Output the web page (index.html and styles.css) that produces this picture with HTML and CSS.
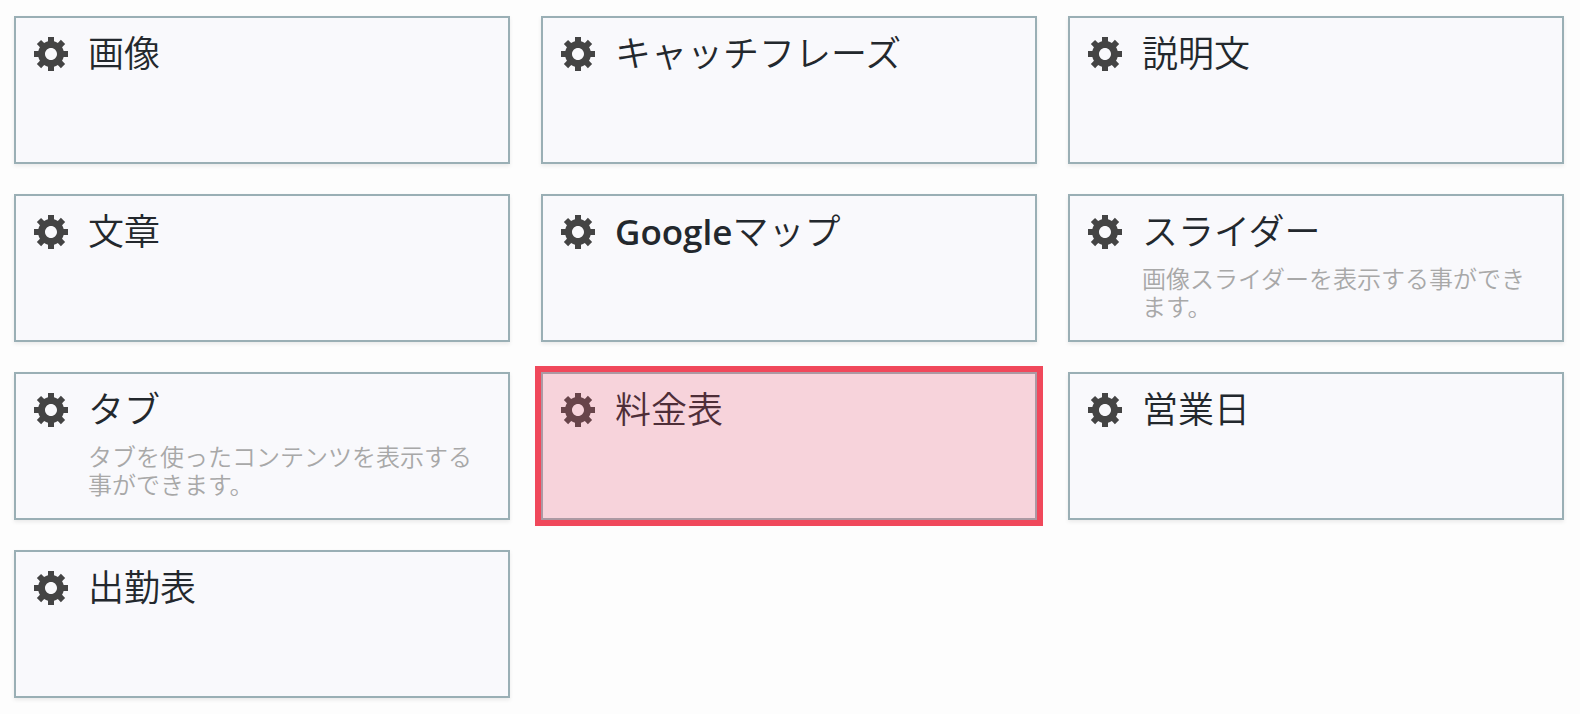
FILE: index.html
```html
<!DOCTYPE html>
<html lang="ja">
<head>
    <meta charset="UTF-8">
    <meta name="viewport" content="width=device-width, initial-scale=1.0">
    <title>ウィジェット</title>
    <link rel="stylesheet" href="styles.css">
</head>
<body>
    <svg class="sprite" aria-hidden="true">
        <symbol id="gear" viewBox="1 2 17 17">
            <path d="M18 12h-2.18c-.17.7-.44 1.35-.81 1.93l1.54 1.54-2.1 2.1-1.54-1.54c-.58.36-1.23.63-1.91.79V19H8v-2.18c-.68-.16-1.33-.43-1.91-.79l-1.54 1.54-2.12-2.12 1.54-1.54c-.36-.58-.63-1.23-.79-1.91H1V9.03h2.17c.16-.7.44-1.35.8-1.94L2.43 5.55l2.1-2.1 1.54 1.54c.58-.37 1.24-.64 1.93-.81V2h3v2.18c.68.16 1.33.43 1.91.79l1.54-1.54 2.12 2.12-1.54 1.54c.36.59.64 1.24.8 1.94H18V12zm-8.5 1.5c1.66 0 3-1.34 3-3s-1.34-3-3-3-3 1.34-3 3 1.34 3 3 3z"/>
        </symbol>
    </svg>
    <ul class="widget-list">
        <li class="widget">
            <svg class="icon"><use href="#gear"/></svg>
            <div class="widget-text">
                <h3>画像</h3>
            </div>
        </li>
        <li class="widget">
            <svg class="icon"><use href="#gear"/></svg>
            <div class="widget-text">
                <h3>キャッチフレーズ</h3>
            </div>
        </li>
        <li class="widget">
            <svg class="icon"><use href="#gear"/></svg>
            <div class="widget-text">
                <h3>説明文</h3>
            </div>
        </li>
        <li class="widget">
            <svg class="icon"><use href="#gear"/></svg>
            <div class="widget-text">
                <h3>文章</h3>
            </div>
        </li>
        <li class="widget">
            <svg class="icon"><use href="#gear"/></svg>
            <div class="widget-text">
                <h3><span class="latin">Google</span>マップ</h3>
            </div>
        </li>
        <li class="widget">
            <svg class="icon"><use href="#gear"/></svg>
            <div class="widget-text">
                <h3>スライダー</h3>
                <p>画像スライダーを表示する事ができます。</p>
            </div>
        </li>
        <li class="widget">
            <svg class="icon"><use href="#gear"/></svg>
            <div class="widget-text">
                <h3>タブ</h3>
                <p>タブを使ったコンテンツを表示する事ができます。</p>
            </div>
        </li>
        <li class="widget selected">
            <svg class="icon"><use href="#gear"/></svg>
            <div class="widget-text">
                <h3>料金表</h3>
            </div>
        </li>
        <li class="widget">
            <svg class="icon"><use href="#gear"/></svg>
            <div class="widget-text">
                <h3>営業日</h3>
            </div>
        </li>
        <li class="widget">
            <svg class="icon"><use href="#gear"/></svg>
            <div class="widget-text">
                <h3>出勤表</h3>
            </div>
        </li>
    </ul>
</body>
</html>
```
FILE: styles.css
```css
* {
    box-sizing: border-box;
}

body {
    margin: 0;
    background: #fdfdfd;
    color: #23282d;
    font-family: "Noto Sans CJK JP", sans-serif;
    font-weight: 350;
}

.sprite {
    display: none;
}

.widget-list {
    display: grid;
    grid-template-columns: repeat(3, 1fr);
    gap: 30px 31px;
    margin: 0;
    padding: 16px 16px 16px 14px;
    list-style: none;
}

.widget {
    position: relative;
    display: flex;
    gap: 20px;
    min-height: 148px;
    padding: 18px;
    background: #f9f9fc;
    border: 2px solid #9aafb5;
    box-shadow: 0 2px 4px rgba(0, 0, 0, 0.08);
}

.icon {
    flex: none;
    width: 34px;
    height: 34px;
    margin-top: 1px;
    fill: #444;
}

.widget-text {
    flex: 1;
}

.widget h3 {
    margin: 0;
    font-size: 36px;
    line-height: 30px;
    font-weight: 350;
}

.widget .latin {
    font-family: "Open Sans", sans-serif;
    font-size: 35px;
    font-weight: 600;
}

.widget p {
    margin: 20px 0 0;
    color: #a8a8a8;
    font-size: 24px;
    line-height: 28px;
}

/* red frame and tint over the selected widget */
.selected::after {
    content: "";
    position: absolute;
    inset: -8px;
    border: 6px solid #f0485b;
    background: rgba(240, 72, 100, 0.21);
}
```
